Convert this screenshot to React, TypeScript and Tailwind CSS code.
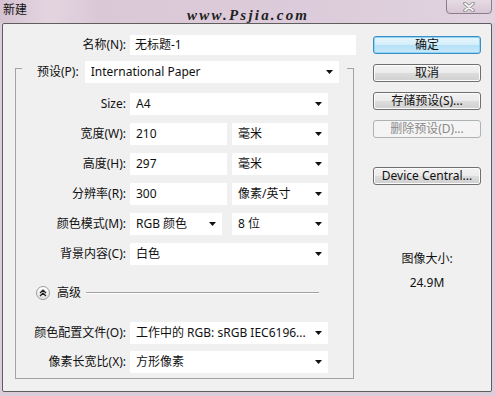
import React from "react";

const FONT = { fontFamily: '"Noto Sans", "Noto Sans CJK SC", sans-serif' };

function Arrow() {
  return (
    <svg width="7" height="4" viewBox="0 0 7 4" className="shrink-0">
      <path d="M0 0 H7 L3.5 4 Z" fill="#111" />
    </svg>
  );
}

function Select({ text, className = "" }: { text: string; className?: string }) {
  return (
    <div className={`flex items-center h-[22px] bg-white pl-[6px] pr-[6px] text-[12px] text-[#111] ${className}`}>
      <span className="flex-1 whitespace-nowrap overflow-hidden">{text}</span>
      <Arrow />
    </div>
  );
}

function Input({ text, className = "" }: { text: string; className?: string }) {
  return (
    <div className={`flex items-center h-[22px] bg-white pl-[6px] text-[12px] text-[#111] ${className}`}>
      <span className="whitespace-nowrap">{text}</span>
    </div>
  );
}

function Row({ label, children }: { label: string; children: React.ReactNode }) {
  return (
    <div className="flex items-center h-[22px]">
      <div className="w-[110px] text-right text-[12px] text-[#111] whitespace-nowrap">{label}</div>
      <div className="ml-[4px] flex items-center gap-[4px]">{children}</div>
    </div>
  );
}

function Btn({ text, kind = "normal", className = "" }: { text: string; kind?: "normal" | "default" | "disabled"; className?: string }) {
  const styles =
    kind === "default"
      ? "border-[#3c8fc4] bg-[linear-gradient(#e9f6fd,#d3eefb_50%,#b4e0f7_51%,#c9e9f9)] text-[#111] shadow-[inset_0_0_0_1px_#8fd3f5]"
      : kind === "disabled"
      ? "border-[#adb2b5] bg-[#f4f4f4] text-[#8a8a8a]"
      : "border-[#707070] bg-[linear-gradient(#f2f2f2,#ebebeb_50%,#dddddd_51%,#cfcfcf)] text-[#111] shadow-[inset_0_0_0_1px_#fcfcfc]";
  return (
    <div className={`flex items-center justify-center w-[108px] h-[18px] border rounded-[3px] text-[12px] leading-none ${styles} ${className}`}>
      {text}
    </div>
  );
}

export default function App() {
  return (
    <div className="w-[495px] h-[396px] bg-[#dccddb] overflow-hidden relative" style={FONT}>
      {/* title bar */}
      <div className="relative h-[23px] flex items-start bg-[linear-gradient(90deg,#d6c2d2_0%,#e3d5e0_10%,#dbc8d7_20%,#dccbda_60%,#e1d3df_100%)]">
        <div className="pl-[3px] pt-[3px] text-[12px] text-[#111] leading-[14px]">新建</div>
        <div
          className="absolute left-[187px] top-[4px] text-[15px] italic font-bold tracking-[2.2px] text-[#222]"
          style={{ fontFamily: '"Liberation Serif", serif' }}
        >
          www.Psjia.com
        </div>
        <div className="absolute left-[446px] top-[-1px] w-[46px] h-[15px] border border-[#8d7d8c] rounded-b-[4px] bg-[linear-gradient(#e6dbe4,#d8c7d5)] flex items-center justify-center">
          <svg width="14" height="10" viewBox="0 0 14 10">
            <path d="M3 1.5 L11 8.5 M11 1.5 L3 8.5" stroke="#8a8a8a" strokeWidth="3.6" strokeLinecap="round" />
            <path d="M3 1.5 L11 8.5 M11 1.5 L3 8.5" stroke="#f4f4f4" strokeWidth="1.8" strokeLinecap="round" />
          </svg>
        </div>
      </div>

      {/* client */}
      <div className="ml-[2px] mr-[3px] h-[369px] border border-[#5e5e5e] rounded-[2px] bg-[#f0f0f0] flex">
        {/* left column */}
        <div className="w-[354px] pt-[11px]">
          <div className="flex items-center h-[20px]">
            <div className="w-[123px] text-right text-[12px] text-[#111] whitespace-nowrap">名称(N):</div>
            <div className="ml-[4px] w-[226px] h-[20px] bg-white pl-[5px] flex items-center text-[12px] text-[#111]">无标题-1</div>
          </div>

          <div className="mt-[13px] ml-[12px] w-[339px] border border-[#a3a3a3] pb-[5px]">
            <div className="-mt-[8px] mx-[6px] bg-[#f0f0f0] flex items-center h-[22px] pl-[15px] pr-[8px]">
              <span className="text-[12px] text-[#111] whitespace-nowrap">预设(P):</span>
              <Select text="International Paper" className="ml-[6px] flex-1" />
            </div>

            <div className="mt-[10px] flex flex-col gap-[8px]">
              <Row label="Size:">
                <Select text="A4" className="w-[198px]" />
              </Row>
              <Row label="宽度(W):">
                <Input text="210" className="w-[97px]" />
                <Select text="毫米" className="ml-[1px] w-[96px]" />
              </Row>
              <Row label="高度(H):">
                <Input text="297" className="w-[97px]" />
                <Select text="毫米" className="ml-[1px] w-[96px]" />
              </Row>
              <Row label="分辨率(R):">
                <Input text="300" className="w-[97px]" />
                <Select text="像素/英寸" className="ml-[1px] w-[96px]" />
              </Row>
              <Row label="颜色模式(M):">
                <Select text="RGB 颜色" className="w-[92px]" />
                <Select text="8 位" className="ml-[6px] w-[96px]" />
              </Row>
              <Row label="背景内容(C):">
                <Select text="白色" className="w-[198px]" />
              </Row>
            </div>

            <div className="mt-[20px] h-[16px] flex items-center pl-[20px] pr-[34px]">
              <div className="w-[14px] h-[14px] rounded-full border border-[#9a9a9a] bg-[linear-gradient(#ffffff,#e2e2e2)] flex items-center justify-center">
                <svg width="8" height="8" viewBox="0 0 8 8">
                  <path d="M1 4 L4 1.2 L7 4 M1 7 L4 4.2 L7 7" stroke="#222" strokeWidth="1.3" fill="none" />
                </svg>
              </div>
              <span className="ml-[7px] text-[12px] text-[#111]">高级</span>
              <div className="ml-[5px] flex-1 h-[2px] border-t border-[#a0a0a0] border-b border-b-white" />
            </div>

            <div className="mt-[21px] flex flex-col gap-[7px]">
              <Row label="颜色配置文件(O):">
                <Select text="工作中的 RGB: sRGB IEC6196..." className="w-[198px]" />
              </Row>
              <Row label="像素长宽比(X):">
                <Select text="方形像素" className="w-[198px]" />
              </Row>
            </div>
          </div>
        </div>

        {/* right column */}
        <div className="ml-[16px] pt-[12px] flex flex-col">
          <div className="flex flex-col gap-[10px]">
            <Btn text="确定" kind="default" />
            <Btn text="取消" />
            <Btn text="存储预设(S)..." />
            <Btn text="删除预设(D)..." kind="disabled" />
          </div>
          <Btn text="Device Central..." className="mt-[29px]" />
          <div className="mt-[67px] w-[108px] text-center text-[12px] text-[#111] leading-[14px]">图像大小:</div>
          <div className="mt-[10px] w-[108px] text-center text-[12px] text-[#111] leading-[14px]">24.9M</div>
        </div>
      </div>
    </div>
  );
}
